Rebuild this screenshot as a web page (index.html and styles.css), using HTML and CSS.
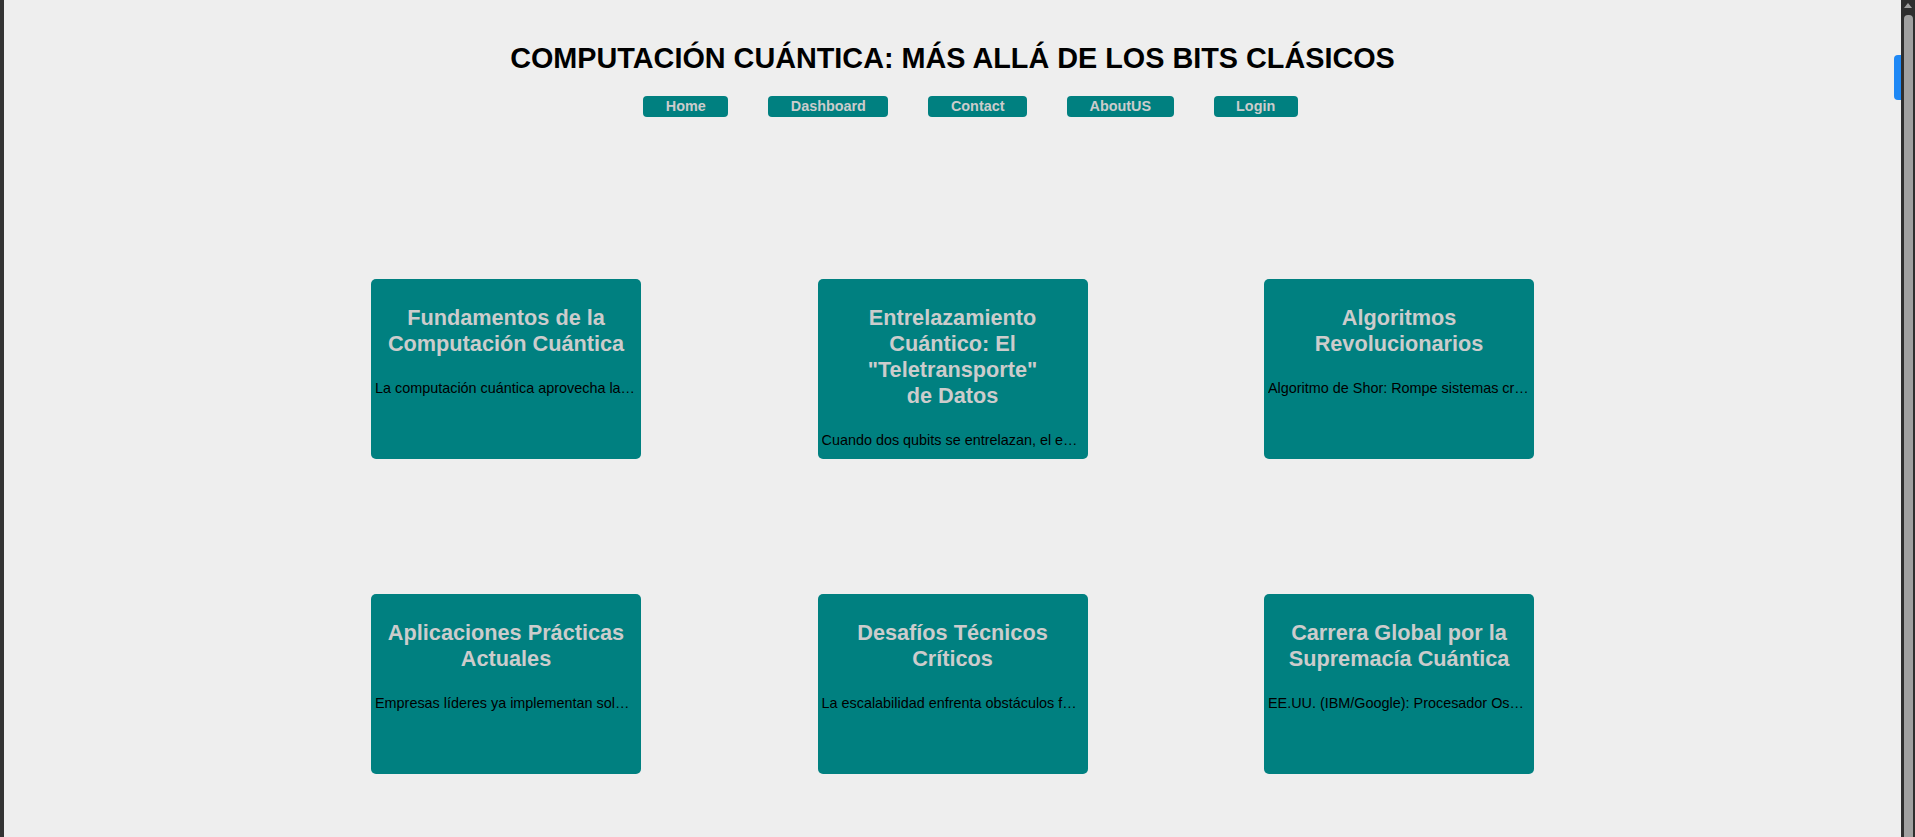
FILE: index.html
```html
<!DOCTYPE html>
<html lang="es">
<head>
<meta charset="utf-8">
<title>Computación Cuántica</title>
<link rel="stylesheet" href="styles.css">
</head>
<body>
<div class="frame-left"></div>
<div class="page">
  <header class="site-header">
    <h1 class="site-title">COMPUTACIÓN CUÁNTICA: MÁS ALLÁ DE LOS BITS CLÁSICOS</h1>
    <ul class="nav">
      <li><a class="nav-link" href="#">Home</a></li>
      <li><a class="nav-link" href="#">Dashboard</a></li>
      <li><a class="nav-link" href="#">Contact</a></li>
      <li><a class="nav-link" href="#">AboutUS</a></li>
      <li><a class="nav-link" href="#">Login</a></li>
    </ul>
  </header>
  <main class="cards">
    <section class="card">
      <h3 class="card-title">Fundamentos de la Computación Cuántica</h3>
      <p class="card-text">La computación cuántica aprovecha las propiedades de la mecánica cuántica para procesar información.</p>
    </section>
    <section class="card">
      <h3 class="card-title">Entrelazamiento Cuántico: El "Teletransporte"<br>de Datos</h3>
      <p class="card-text">Cuando dos qubits se entrelazan, el estado de uno depende instantáneamente del otro.</p>
    </section>
    <section class="card">
      <h3 class="card-title">Algoritmos Revolucionarios</h3>
      <p class="card-text">Algoritmo de Shor: Rompe sistemas criptográficos basados en la factorización.</p>
    </section>
    <section class="card">
      <h3 class="card-title">Aplicaciones Prácticas Actuales</h3>
      <p class="card-text">Empresas líderes ya implementan soluciones cuánticas en química y finanzas.</p>
    </section>
    <section class="card">
      <h3 class="card-title">Desafíos Técnicos Críticos</h3>
      <p class="card-text">La escalabilidad enfrenta obstáculos fundamentales como la decoherencia.</p>
    </section>
    <section class="card">
      <h3 class="card-title">Carrera Global por la Supremacía Cuántica</h3>
      <p class="card-text">EE.UU. (IBM/Google): Procesador Osprey de 433 qubits y Sycamore.</p>
    </section>
  </main>
  <div class="side-tab"></div>
</div>
<div class="scrollbar">
  <div class="scroll-arrow"></div>
  <div class="scroll-thumb"></div>
</div>
</body>
</html>
```

FILE: styles.css
```css
html, body {
  margin: 0;
  padding: 0;
  height: 100%;
}

body {
  display: flex;
  overflow: hidden;
  background: #eeeeee;
  font-family: "Liberation Sans", Arial, sans-serif;
}

.frame-left {
  width: 4px;
  flex: 0 0 4px;
  background: #333333;
}

.page {
  flex: 1;
  position: relative;
  background: #eeeeee;
  min-width: 0;
}

.site-header {
  padding-top: 41.5px;
  text-align: center;
}

.site-title {
  margin: 0;
  font-size: 28.8px;
  font-weight: bold;
  color: #000;
}

.nav {
  list-style: none;
  margin: 21.4px 0 0 0;
  padding: 0 0 0 36px;
  display: flex;
  justify-content: center;
  gap: 40px;
}

.nav-link {
  display: block;
  background: #008080;
  color: #cccccc;
  text-decoration: none;
  font-weight: bold;
  font-size: 14.4px;
  line-height: 21px;
  padding: 0 22.5px;
  border-radius: 4px;
}

.cards {
  display: grid;
  grid-template-columns: repeat(3, 270px);
  column-gap: 176.5px;
  row-gap: 135px;
  justify-content: center;
  margin-top: 162px;
}

.card {
  box-sizing: border-box;
  height: 180px;
  padding: 4px;
  background: #008080;
  border-radius: 5px;
  text-align: center;
  overflow: hidden;
}

.card-title {
  margin: 22.5px 0;
  font-size: 21.7px;
  line-height: 26px;
  font-weight: bold;
  color: #cccccc;
}

.card-text {
  margin: 0;
  font-size: 14.4px;
  color: #000;
  white-space: nowrap;
  overflow: hidden;
  text-overflow: ellipsis;
}

.side-tab {
  position: absolute;
  right: 0;
  top: 55px;
  width: 7px;
  height: 45px;
  background: #1e88f5;
  border-radius: 4px 0 0 4px;
}

.scrollbar {
  width: 14px;
  flex: 0 0 14px;
  background: #2e2e2e;
  display: flex;
  flex-direction: column;
  align-items: center;
}

.scroll-arrow {
  margin-top: 3px;
  width: 0;
  height: 0;
  border-left: 4px solid transparent;
  border-right: 4px solid transparent;
  border-bottom: 5px solid #a0a0a0;
}

.scroll-thumb {
  margin-top: 7px;
  width: 9px;
  flex: 1;
  background: #a0a0a0;
  border-radius: 4px 4px 0 0;
}
```
